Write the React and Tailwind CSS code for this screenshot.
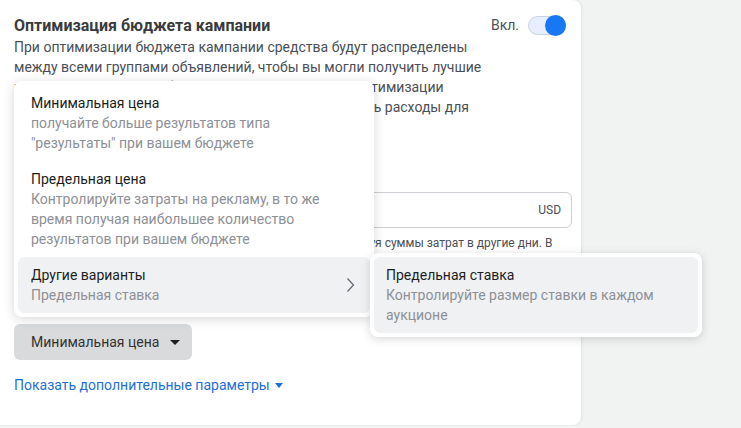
import React from 'react';

const font = { fontFamily: 'Roboto, "Noto Sans", Arial, sans-serif' };

const Chevron = () => (
  <svg width="9" height="16" viewBox="0 0 9 16" className="mr-[2px]">
    <path d="M1.5 1.5L7.5 8L1.5 14.5" fill="none" stroke="#606770" strokeWidth="1.2" />
  </svg>
);

const MenuItem = ({ title, sub, active, arrow }) => (
  <div className={`flex items-center justify-between rounded-md px-[13px] py-2 ${active ? 'bg-[#f0f1f3]' : ''}`}>
    <div>
      <div className="text-[14px] leading-5 text-[#1c1e21]">{title}</div>
      <div className="text-[14px] leading-5 text-[#8d9096]">{sub}</div>
    </div>
    {arrow && <Chevron />}
  </div>
);

export default function App() {
  return (
    <div className="w-[741px] h-[428px] bg-[#f1f2f2] overflow-hidden relative" style={font}>
      {/* основная карточка */}
      <div className="w-[581px] bg-white rounded-r-lg shadow-[1px_0_2px_rgba(0,0,0,0.08)] pt-[14px] pl-[14px] pr-[9px] pb-[30px]">
        <div className="flex items-center justify-between h-[23px] pr-[6px]">
          <div className="text-[16px] font-bold text-[#3a3b3c] leading-6">Оптимизация бюджета кампании</div>
          <div className="flex items-center gap-[9px]">
            <span className="text-[14px] text-[#4b4f56]">Вкл.</span>
            <div className="relative w-[38px] h-[21px]">
              <div className="absolute inset-y-[1px] left-0 right-0 rounded-full bg-[#e7effc] border border-[#c8d2e0]" />
              <div className="absolute right-0 top-0 w-[21px] h-[21px] rounded-full bg-[#1877f2]" />
            </div>
          </div>
        </div>
        <p className="mt-0 max-w-[480px] text-[14px] leading-5 text-[#4b4f56]">
          При оптимизации бюджета кампании средства будут распределены между всеми группами объявлений, чтобы вы могли получить лучшие<br />
          результаты. Можно выбрать стратегию ставок для оптимизации<br />
          кампании, а также при необходимости контролировать расходы для<br />
          каждой группы объявлений.
        </p>

        <div className="mt-4 text-[14px] font-bold leading-5 text-[#333]">Бюджет кампании</div>
        <div className="mt-[19px] flex h-9 gap-2">
          <div className="w-[150px] rounded-md border border-[#ccd0d5] flex items-center px-3 text-[14px] text-[#4b4f56]">Дневной бюджет</div>
          <div className="flex-1 rounded-md border border-[#ccd0d5] flex items-center justify-end px-[10px] text-[12px] text-[#4b4f56]">USD</div>
        </div>
        <p className="mt-[7px] text-[12px] leading-4 text-[#4b4f56] max-w-[558px]">
          Затраты в любой день могут и превышать бюджет, компенсируя суммы затрат в другие дни. В среднем за неделю затраты не превысят дневной бюджет.
        </p>

        <div className="mt-4 text-[14px] font-bold leading-5 text-[#333]">Стратегия ставок кампании</div>
        <button className="mt-[21px] h-9 w-[178px] rounded-md bg-[#d9dadb] flex items-center pl-[17px] gap-[11px] text-[14px] text-[#333]">
          <span>Минимальная цена</span>
          <svg width="10" height="5" viewBox="0 0 10 5"><path d="M0 0h10L5 5z" fill="#1c1e21" /></svg>
        </button>
        <div className="mt-[15px] flex items-center gap-[5px] text-[14px] leading-5 text-[#1f6fd6]">
          <span>Показать дополнительные параметры</span>
          <svg width="8" height="5" viewBox="0 0 8 5"><path d="M0 0h8L4 5z" fill="#1f6fd6" /></svg>
        </div>
      </div>

      {/* выпадающее меню */}
      <div className="absolute left-[14px] top-[81px] w-[360px] rounded-lg bg-white p-1 shadow-[0_2px_12px_rgba(0,0,0,0.16)]">
        <MenuItem title="Минимальная цена" sub={'получайте больше результатов типа "результаты" при вашем бюджете'} />
        <MenuItem title="Предельная цена" sub="Контролируйте затраты на рекламу, в то же время получая наибольшее количество результатов при вашем бюджете" />
        <MenuItem title="Другие варианты" sub="Предельная ставка" active arrow />
      </div>

      {/* подменю */}
      <div className="absolute left-[370px] top-[253px] w-[332px] rounded-lg bg-white p-1 shadow-[0_2px_10px_rgba(0,0,0,0.16)]">
        <div className="rounded-md bg-[#f0f1f3] px-3 py-2">
          <div className="text-[14px] leading-5 text-[#1c1e21]">Предельная ставка</div>
          <div className="text-[14px] leading-5 text-[#8d9096]">Контролируйте размер ставки в каждом аукционе</div>
        </div>
      </div>
    </div>
  );
}
